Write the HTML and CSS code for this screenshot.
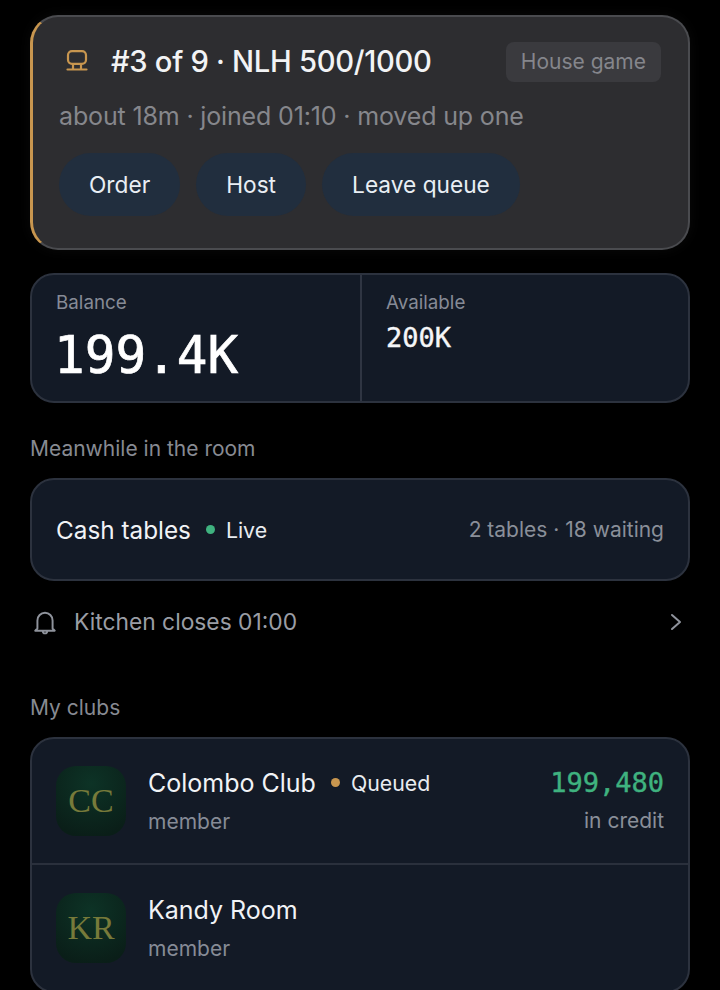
FILE: index.html
```html
<!DOCTYPE html>
<html lang="en">
<head>
<meta charset="utf-8">
<title>Clubs</title>
<link rel="stylesheet" href="styles.css">
</head>
<body>
<main class="page">
  <section class="queue">
    <div class="queue-head">
      <svg class="queue-icon" viewBox="0 0 24 24" width="24" height="24" fill="none" stroke="#c8964f" stroke-width="2.2" stroke-linecap="round" stroke-linejoin="round"><rect x="3" y="1.2" width="18" height="12.6" rx="4"/><path d="M8 14v5M16 14v5M2.5 19.5h19"/></svg>
      <h1 class="queue-title">#3 of 9 · NLH 500/1000</h1>
      <span class="tag">House game</span>
    </div>
    <p class="queue-sub">about 18m · joined 01:10 · moved up one</p>
    <div class="actions">
      <button class="pill">Order</button>
      <button class="pill">Host</button>
      <button class="pill">Leave queue</button>
    </div>
  </section>

  <section class="stats">
    <div class="stat stat-main">
      <div class="stat-label">Balance</div>
      <div class="stat-big">199.4K</div>
    </div>
    <div class="stat">
      <div class="stat-label">Available</div>
      <div class="stat-small">200K</div>
    </div>
  </section>

  <h2 class="section-title first">Meanwhile in the room</h2>
  <section class="live">
    <span class="live-name">Cash tables</span>
    <span class="dot dot-green"></span>
    <span class="status">Live</span>
    <span class="live-meta">2 tables · 18 waiting</span>
  </section>

  <div class="notice">
    <svg class="bell" viewBox="0 0 24 24" width="26" height="26" fill="none" stroke="#8f939c" stroke-width="1.8" stroke-linecap="round" stroke-linejoin="round"><path d="M5 18v-7.5a7 7 0 0 1 14 0V18l2 2H3z"/><path d="M10 20.5a2 2 0 0 0 4 0"/></svg>
    <span class="notice-text">Kitchen closes 01:00</span>
    <svg class="chev" viewBox="0 0 12 18" width="12" height="18" fill="none" stroke="#8f939c" stroke-width="2" stroke-linecap="round" stroke-linejoin="round"><path d="M2 2l8 7-8 7"/></svg>
  </div>

  <h2 class="section-title clubs-title">My clubs</h2>
  <section class="clubs">
    <div class="club">
      <div class="avatar">CC</div>
      <div class="club-info">
        <div class="club-line">
          <span class="club-name">Colombo Club</span>
          <span class="dot dot-amber"></span>
          <span class="status">Queued</span>
        </div>
        <div class="club-role">member</div>
      </div>
      <div class="club-credit">
        <div class="credit-num">199,480</div>
        <div class="credit-label">in credit</div>
      </div>
    </div>
    <div class="club">
      <div class="avatar">KR</div>
      <div class="club-info">
        <div class="club-line"><span class="club-name">Kandy Room</span></div>
        <div class="club-role">member</div>
      </div>
    </div>
  </section>
</main>
</body>
</html>
```

FILE: styles.css
```css
* { box-sizing: border-box; }
html, body { margin: 0; height: 100%; background: #000; overflow: hidden; }
body { font-family: "Inter", "Noto Sans", sans-serif; color: #f1f3f6; }
.page { padding: 15px 30px 0; display: flex; flex-direction: column; }

.queue {
  height: 235px;
  background: #2d2d30;
  border: 2px solid #4a4b4f;
  border-left: 3px solid #c8964f;
  border-radius: 28px;
  padding: 24px 27px 0 26px;
  box-shadow: 0 0 14px rgba(255,255,255,.04);
}
.queue-head { display: flex; align-items: center; height: 41px; }
.queue-icon { margin: 0 22px 0 6px; flex: none; }
.queue-title { margin: 0; font-size: 29.2px; font-weight: 500; letter-spacing: -.3px; color: #f2f3f5; flex: 1; }
.tag { background: #3a3a3e; color: #85868c; font-size: 21px; border-radius: 8px; padding: 0 15px; height: 40px; line-height: 40px; }
.queue-sub { margin: 17px 0 0; font-size: 25px; line-height: 34px; color: #86878c; letter-spacing: -.15px; }
.actions { display: flex; gap: 16px; margin-top: 20px; }
.pill { border: 0; height: 63px; border-radius: 32px; background: #212e3e; color: #e9eef4; font: 400 22.7px "Inter", sans-serif; padding: 0 30px; }

.stats {
  margin-top: 23px;
  height: 130px;
  display: flex;
  background: #131a26;
  border: 2px solid #2c323e;
  border-radius: 24px;
}
.stat { flex: 1; padding: 16px 24px 0; }
.stat-main { flex: none; width: 330px; border-right: 2px solid #2f3542; }
.stat-label { font-size: 18.8px; line-height: 24px; color: #868b96; }
.stat-big { font: 400 51px/60px "DejaVu Sans Mono", monospace; color: #fff; margin: 11px 0 0 -2px; -webkit-text-stroke: .7px #fff; }
.stat-small { font: 400 27px/34px "DejaVu Sans Mono", monospace; color: #f5f6f8; margin-top: 6px; -webkit-text-stroke: .4px #f5f6f8; }

.section-title { margin: 0; font-size: 21px; font-weight: 400; line-height: 30px; color: #878a92; }
.first { margin-top: 31px; }

.live {
  margin-top: 14px;
  height: 103px;
  background: #131a26;
  border: 2px solid #2c323e;
  border-radius: 24px;
  padding: 0 24px;
  display: flex;
  align-items: center;
}
.live-name { font-size: 24.3px; font-weight: 400; color: #f1f3f6; }
.dot { width: 9px; height: 9px; border-radius: 50%; margin: 0 11px 0 15px; flex: none; }
.dot-green { background: #3fb27f; }
.dot-amber { background: #c8964f; }
.status { font-size: 21.3px; font-weight: 400; color: #e9ecf0; }
.live-meta { margin-left: auto; font-size: 21px; color: #8a8f99; }

.notice { display: flex; align-items: center; height: 81px; padding: 0 8px 0 2px; }
.bell { flex: none; margin-right: 16px; }
.notice-text { font-size: 22.8px; color: #9a9da5; flex: 1; }

.clubs-title { margin-top: 31px; margin-bottom: 14px; }

.clubs {
  background: #131a26;
  border: 2px solid #2c323e;
  border-radius: 24px;
}
.club { display: flex; align-items: center; height: 124px; padding: 0 24px; }
.club + .club { border-top: 2px solid #2a303c; height: 128px; }
.avatar {
  width: 70px; height: 70px; border-radius: 20px; flex: none;
  background: radial-gradient(circle at 50% 25%, #0d3326, #0a1e18 85%);
  color: #777a3a;
  font: 34px/70px "Liberation Serif", serif;
  text-align: center;
}
.club-info { margin-left: 22px; flex: 1; }
.club-line { display: flex; align-items: center; height: 34px; }
.club-name { font-size: 25px; font-weight: 400; color: #f1f3f6; }
.club-role { font-size: 21px; line-height: 30px; color: #868b96; margin-top: 7px; }
.club-credit { text-align: right; }
.credit-num { font: 400 27px/34px "DejaVu Sans Mono", monospace; color: #3fb27f; -webkit-text-stroke: .4px #3fb27f; }
.credit-label { font-size: 21px; line-height: 30px; color: #8a8f99; margin-top: 6px; }
```
